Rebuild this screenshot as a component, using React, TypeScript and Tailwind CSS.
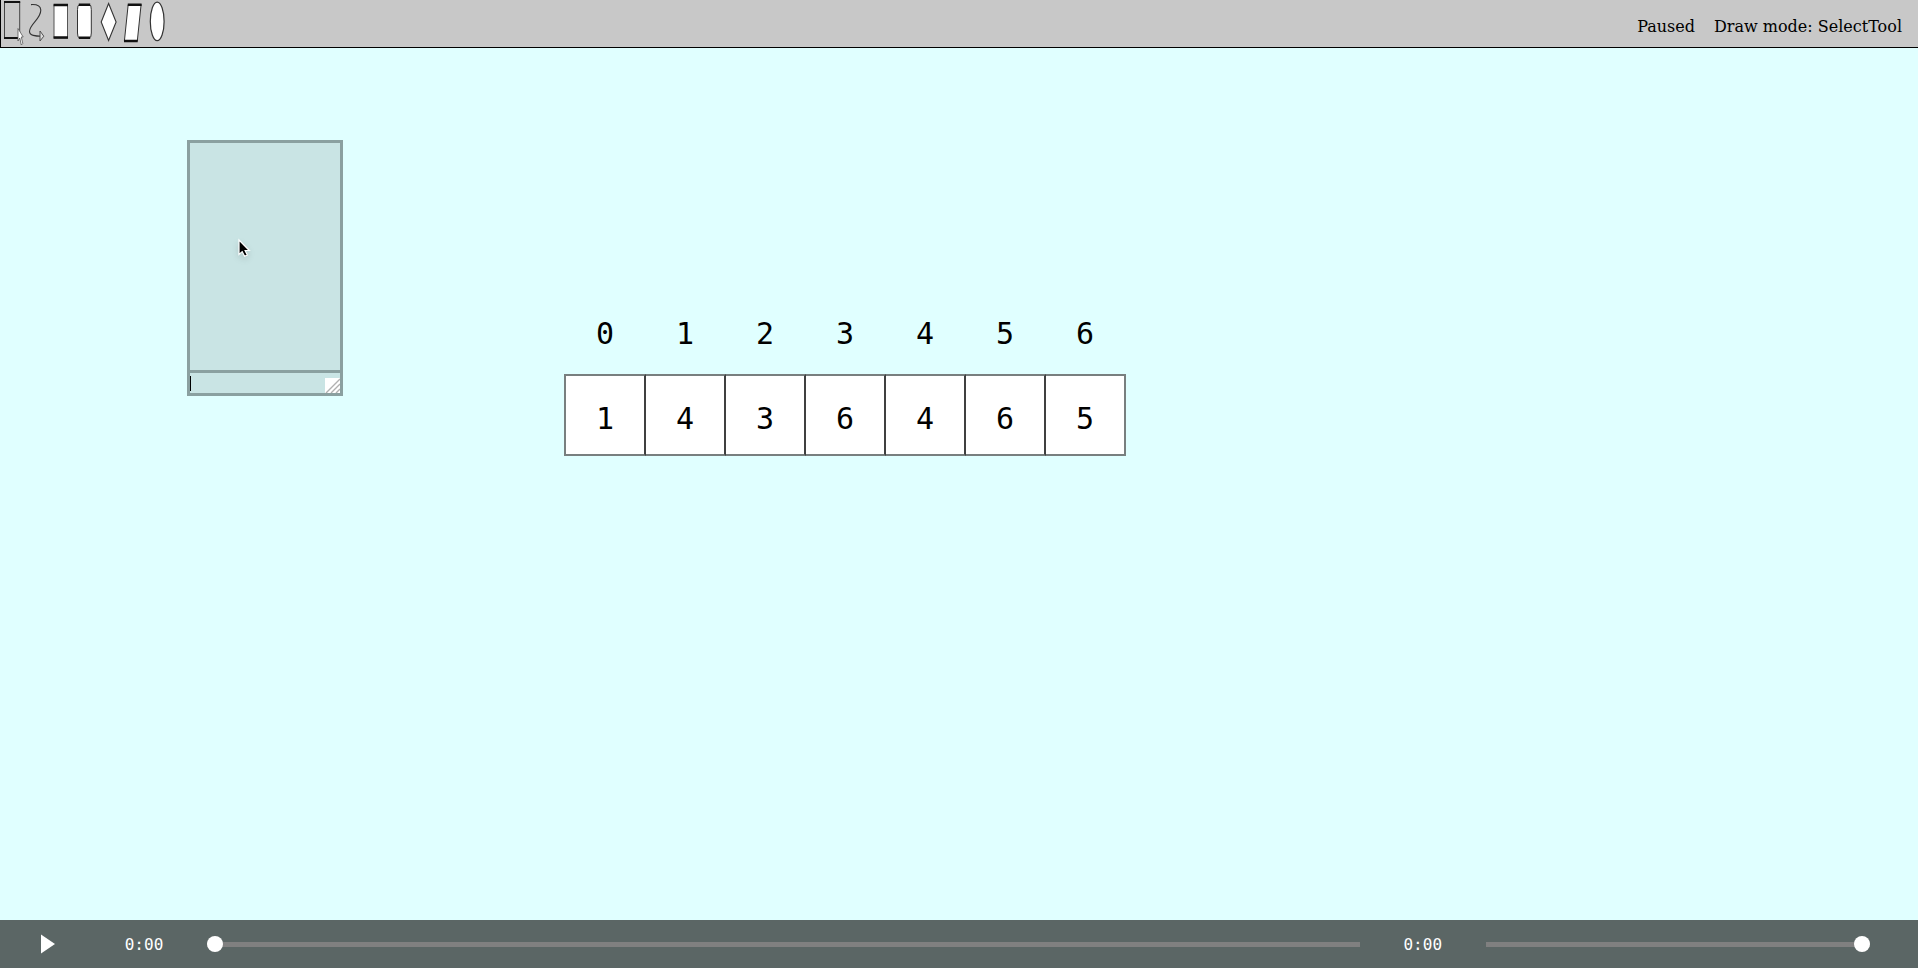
import { useState, type ReactNode } from "react";

const INDICES = [0, 1, 2, 3, 4, 5, 6];
const VALUES = [1, 4, 3, 6, 4, 6, 5];

const TOOLS: { name: string; icon: ReactNode }[] = [
  {
    name: "Select",
    icon: (
      <>
        <path d="M3.5 2V38M18.700 2V38" stroke="#444" strokeWidth="1" fill="none" />
        <path d="M3 2H19.2M3 38H19.2" stroke="#111" strokeWidth="2.200" fill="none" />
        <path d="M17 28.5V41L18.8 38L20.3 45L21.8 43.5L20.3 37H22.2Z" fill="#fff" stroke="#555" strokeWidth="0.8" />
      </>
    ),
  },
  {
    name: "Connector",
    icon: (
      <>
        <path
          d="M6 4.6C12 4.2 15.5 6 15.800 10C16 19 4.500 24 4.500 31.500C4.500 35.500 10 36.300 18 36.200"
          stroke="#333"
          strokeWidth="1.100"
          fill="none"
        />
        <path d="M15 31V41L18.800 36.200Z" fill="#ddd" stroke="#444" strokeWidth="0.9" />
      </>
    ),
  },
  {
    name: "Rectangle",
    icon: (
      <>
        <rect x="5" y="5" width="13.500" height="33" fill="#fff" stroke="#555" />
        <path d="M4.600 5H19M4.600 37.500H19" stroke="#111" strokeWidth="2.400" />
      </>
    ),
  },
  {
    name: "Rounded rectangle",
    icon: (
      <>
        <rect x="4.500" y="4.500" width="13.800" height="33.500" rx="2" ry="5" fill="#fff" stroke="#333" />
        <path d="M5.800 4.700H17.200M5.800 37.700H17.200" stroke="#111" strokeWidth="2.600" />
      </>
    ),
  },
  {
    name: "Diamond",
    icon: <path d="M11.600 3.500L19.100 22L11.600 40.500L4.200 22Z" fill="#fff" stroke="#333" strokeWidth="1.100" />,
  },
  {
    name: "Parallelogram",
    icon: (
      <>
        <path d="M7.200 4.500H20.100L16.300 41H3.400Z" fill="#fff" stroke="#333" />
        <path d="M6.800 4.700H20.600M3 41H16.700" stroke="#111" strokeWidth="2.400" />
      </>
    ),
  },
  {
    name: "Ellipse",
    icon: <ellipse cx="12.200" cy="21.400" rx="6.900" ry="19.200" fill="#fff" stroke="#333" strokeWidth="1.200" />,
  },
];

const SLIDER =
  "h-4 min-w-0 cursor-pointer appearance-none bg-transparent outline-none [&::-webkit-slider-runnable-track]:h-[5px] [&::-webkit-slider-runnable-track]:bg-[#808080] [&::-webkit-slider-thumb]:-mt-[6px] [&::-webkit-slider-thumb]:size-4 [&::-webkit-slider-thumb]:appearance-none [&::-webkit-slider-thumb]:rounded-full [&::-webkit-slider-thumb]:bg-white";

function Toolbar() {
  return (
    <header className="flex h-12 shrink-0 items-center justify-between border-b border-l border-black bg-[#c8c8c8]">
      <nav aria-label="Drawing tools" className="flex h-full">
        {TOOLS.map((tool) => (
          <button key={tool.name} type="button" aria-label={tool.name} className="h-full w-6">
            <svg viewBox="0 0 24 47" className="h-full w-full" aria-hidden="true">
              {tool.icon}
            </svg>
          </button>
        ))}
      </nav>
      <div className="flex gap-[19px] pt-1.5 pr-4 font-['DejaVu_Serif',serif] text-base text-black">
        <span>Paused</span>
        <span>Draw mode: SelectTool</span>
      </div>
    </header>
  );
}

function TextNode() {
  return (
    <div className="absolute top-[92px] left-[187px] flex h-64 w-[156px] flex-col border-[3px] border-[#8aa0a0] bg-[#c9e4e4]">
      <div className="flex-1" />
      <div className="relative h-[23px] border-t-[3px] border-[#8aa0a0]">
        <textarea
          aria-label="Node text"
          rows={1}
          className="block h-5 w-full resize-none bg-transparent font-['DejaVu_Sans_Mono',monospace] text-xs leading-5 caret-transparent outline-none"
        />
        <span className="absolute top-[3px] left-0 h-[15px] w-px bg-black" />
        <svg viewBox="0 0 15 15" className="absolute right-0 bottom-0 size-[15px] bg-white" aria-hidden="true">
          <path d="M1 15L15 1M6 15L15 6M11 15L15 11" stroke="#b0b0b0" strokeWidth="1.400" />
        </svg>
      </div>
      <svg viewBox="0 0 14 20" className="absolute top-[96px] left-[48px] h-5 w-[14px] overflow-visible drop-shadow-md" aria-hidden="true">
        <path d="M1 1V15.500L4.200 12.600L6.600 17.300L9.300 16L7.100 11.500H11.300Z" fill="#000" stroke="#fff" strokeWidth="1.200" />
      </svg>
    </div>
  );
}

function ArrayNode() {
  return (
    <table className="absolute top-[248px] left-[564px] table-fixed border-separate border-spacing-0 text-center font-['DejaVu_Sans_Mono',monospace] text-[30px] leading-9 text-black">
      <thead>
        <tr>
          {INDICES.map((index) => (
            <th key={index} scope="col" className="h-[78px] p-0 pr-0.5 pb-0.5 text-center font-normal first:pr-0">
              {index}
            </th>
          ))}
        </tr>
      </thead>
      <tbody>
        <tr>
          {VALUES.map((value, i) => (
            <td
              key={i}
              className="h-[82px] w-20 border-y-2 border-r-2 border-y-[#787f7f] border-r-[#404040] bg-white p-0 pt-2 first:w-[82px] first:border-l-2 first:border-l-[#787f7f] last:border-r-[#787f7f]"
            >
              {value}
            </td>
          ))}
        </tr>
      </tbody>
    </table>
  );
}

function Player() {
  const [position, setPosition] = useState(0);
  const [volume, setVolume] = useState(100);
  return (
    <footer className="flex h-12 shrink-0 items-center bg-[#5b6665] pr-[33px] font-['DejaVu_Sans_Mono',monospace] text-base text-white">
      <button type="button" aria-label="Play" className="flex h-full w-24 items-center justify-center">
        <svg viewBox="0 0 14 20" className="h-5 w-[14px]" aria-hidden="true">
          <path d="M0 0.500L14 10L0 19.500Z" fill="#fff" />
        </svg>
      </button>
      <span className="w-24 pt-0.5 text-center">0:00</span>
      <input
        type="range"
        aria-label="Position"
        value={position}
        onChange={(e) => setPosition(Number(e.target.value))}
        className={`mx-[15px] flex-3 ${SLIDER}`}
      />
      <span className="w-24 pt-0.5 text-center">0:00</span>
      <input
        type="range"
        aria-label="Volume"
        value={volume}
        onChange={(e) => setVolume(Number(e.target.value))}
        className={`mx-[15px] flex-1 ${SLIDER}`}
      />
    </footer>
  );
}

export default function App() {
  return (
    <div className="flex h-screen flex-col overflow-hidden bg-[#e0ffff]">
      <Toolbar />
      <main className="relative flex-1">
        <TextNode />
        <ArrayNode />
      </main>
      <Player />
    </div>
  );
}
